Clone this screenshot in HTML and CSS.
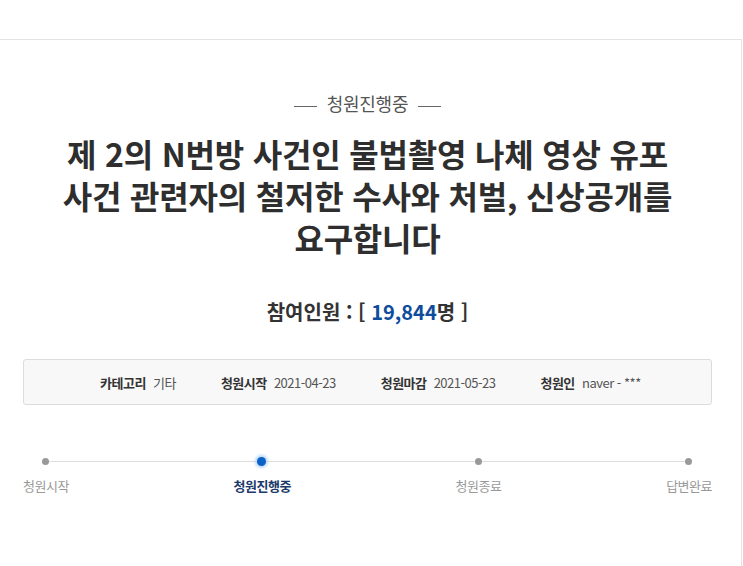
FILE: index.html
```html
<!DOCTYPE html>
<html lang="ko">
<head>
  <meta charset="UTF-8" />
  <title>청원진행중</title>
  <link rel="stylesheet" href="styles.css">
</head>
<body>

  <div class="petition">
    <p class="status">청원진행중</p>

    <h1 class="title">제 2의 N번방 사건인 불법촬영 나체 영상 유포<br>사건 관련자의 철저한 수사와 처벌, 신상공개를<br>요구합니다</h1>

    <h2 class="count">참여인원 : [ <span class="num">19,844</span>명 ]</h2>

    <ul class="info">
      <li><strong>카테고리</strong> 기타</li>
      <li><strong>청원시작</strong> 2021-04-23</li>
      <li><strong>청원마감</strong> 2021-05-23</li>
      <li><strong>청원인</strong> naver - ***</li>
    </ul>

    <ol class="steps">
      <li>청원시작</li>
      <li class="on">청원진행중</li>
      <li>청원종료</li>
      <li>답변완료</li>
    </ol>
  </div>

</body>
</html>
```

FILE: styles.css
```css
body {
  margin: 0;
  font-family: 'Noto Sans CJK KR', 'Noto Sans', sans-serif;
  color: #333;
  background: #fff;
}
.petition {
  width: 712px;
  height: 526px;
  margin-top: 39px;
  padding: 0 29px 0 0;
  border-top: 1px solid #e3e3e3;
  border-right: 1px solid #e3e3e3;
}
.status {
  margin: 0;
  padding-top: 50px;
  padding-left: 23px;
  text-align: center;
  font-size: 18px;
  line-height: 26px;
  color: #555;
  letter-spacing: -0.3px;
}
.status::before,
.status::after {
  content: "";
  display: inline-block;
  width: 23px;
  height: 1px;
  background: #666;
  vertical-align: middle;
  margin: 0 10px;
}
.title {
  margin: 16px 0 0 23px;
  text-align: center;
  font-size: 32px;
  line-height: 42px;
  font-weight: bold;
  letter-spacing: -0.2px;
  color: #2e2e2e;
}
.count {
  margin: 40px 0 0 23px;
  text-align: center;
  font-size: 20px;
  line-height: 28px;
  font-weight: bold;
  color: #333;
}
.count .num {
  color: #0f4c9c;
}
.info {
  list-style: none;
  margin: 33px 0 0 23px;
  padding: 0 0 0 76px;
  height: 44px;
  display: flex;
  align-items: center;
  gap: 45px;
  background: #f8f8f8;
  border: 1px solid #dcdcdc;
  border-radius: 3px;
  font-size: 13px;
  color: #555;
  letter-spacing: -0.5px;
}
.info strong {
  color: #333;
  margin-right: 4px;
}
.steps {
  list-style: none;
  margin: 49px 0 0 23px;
  padding: 0;
  display: flex;
  justify-content: space-between;
  position: relative;
  font-size: 13px;
  color: #999;
  letter-spacing: -0.5px;
}
.steps::before {
  content: "";
  position: absolute;
  left: 23px;
  right: 23px;
  top: 7px;
  height: 1px;
  background: #ddd;
}
.steps li {
  position: relative;
  padding-top: 22px;
  text-align: center;
}
.steps li::before {
  content: "";
  position: absolute;
  top: 4px;
  left: 50%;
  width: 7px;
  height: 7px;
  margin-left: -4px;
  border-radius: 50%;
  background: #999;
}
.steps li.on {
  color: #1b3a6b;
  font-weight: bold;
}
.steps li.on::before {
  top: 3px;
  width: 9px;
  height: 9px;
  margin-left: -5px;
  background: #0a62c8;
  box-shadow: 0 0 3px 2px #b8d6f7;
}
```
